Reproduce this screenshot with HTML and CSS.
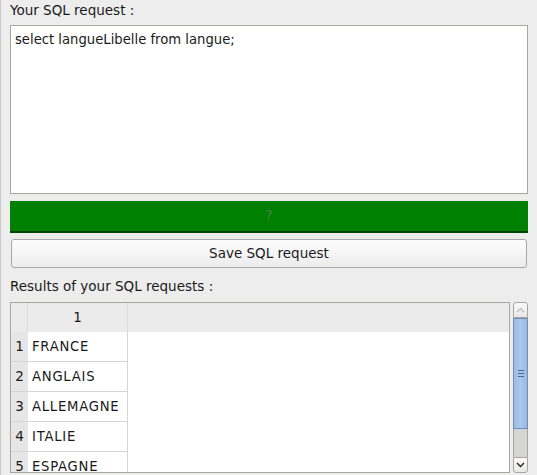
FILE: index.html
```html
<!DOCTYPE html>
<html>
<head>
<meta charset="utf-8">
<link rel="stylesheet" href="styles.css">
</head>
<body>
<div class="page">
  <div class="label top-label">Your SQL request :</div>
  <div class="editor">select langueLibelle from langue;</div>
  <div class="status">?</div>
  <div class="button">Save SQL request</div>
  <div class="label results-label">Results of your SQL requests :</div>
  <div class="results">
    <div class="table">
      <div class="row head">
        <div class="rownum"></div>
        <div class="cell">1</div>
        <div class="rest"></div>
      </div>
      <div class="row"><div class="rownum">1</div><div class="cell">FRANCE</div><div class="rest"></div></div>
      <div class="row"><div class="rownum">2</div><div class="cell">ANGLAIS</div><div class="rest"></div></div>
      <div class="row"><div class="rownum">3</div><div class="cell">ALLEMAGNE</div><div class="rest"></div></div>
      <div class="row"><div class="rownum">4</div><div class="cell">ITALIE</div><div class="rest"></div></div>
      <div class="row"><div class="rownum">5</div><div class="cell">ESPAGNE</div><div class="rest"></div></div>
    </div>
    <div class="scrollbar">
      <div class="sb-btn up"><svg width="9" height="6" viewBox="0 0 9 6"><path d="M1 5 L4.5 1.5 L8 5" fill="none" stroke="#b8b8b8" stroke-width="1.2"/></svg></div>
      <div class="sb-slider"><span></span><span></span><span></span></div>
      <div class="sb-track"></div>
      <div class="sb-btn down"><svg width="9" height="6" viewBox="0 0 9 6"><path d="M1 1 L4.5 4.5 L8 1" fill="none" stroke="#222" stroke-width="1.4"/></svg></div>
    </div>
  </div>
</div>
</body>
</html>
```
FILE: styles.css
```css
html, body {
  margin: 0;
  padding: 0;
  background: #ededed;
}
.page {
  width: 537px;
  height: 475px;
  box-sizing: border-box;
  padding: 0 9px 0 9px;
  overflow: hidden;
  font-family: "DejaVu Sans", sans-serif;
  font-size: 13px;
  color: #1a1a1a;
  border-left: 1px solid #c9c9c9;
  display: flex;
  flex-direction: column;
}
.label {
  height: 25px;
  line-height: 22px;
  font-size: 13.5px;
}
.top-label { line-height: 21px; }
.editor {
  height: 169px;
  box-sizing: border-box;
  background: #ffffff;
  border: 1px solid #a9a6a2;
  padding: 6px 4px;
  font-size: 13.2px;
  line-height: 15px;
}
.status {
  margin-top: 7px;
  height: 32px;
  box-sizing: border-box;
  background: #008000;
  border-bottom: 2px solid #004500;
  color: #4f7d4f;
  text-align: center;
  line-height: 29px;
  font-size: 14px;
}
.button {
  margin: 6px 1px 0 1px;
  height: 29px;
  box-sizing: border-box;
  border: 1px solid #a8a8a8;
  border-radius: 3px;
  background: linear-gradient(#fdfdfd, #ececec);
  text-align: center;
  line-height: 27px;
  font-size: 13.5px;
}
.results-label {
  margin-top: 6px;
  height: 28px;
  line-height: 24px;
}
.results {
  display: flex;
  gap: 3px;
  height: 171px;
}
.table {
  flex: 1;
  border: 1px solid #a9a6a2;
  background: #ffffff;
  overflow: hidden;
}
.row {
  display: flex;
  height: 30px;
  box-sizing: border-box;
}
.row .rownum {
  width: 17px;
  box-sizing: border-box;
  background: #e6e6e6;
  border-bottom: 1px solid #d4d4d4;
  text-align: center;
  line-height: 29px;
  font-size: 13.5px;
}
.row .cell {
  width: 100px;
  box-sizing: border-box;
  border-right: 1px solid #d4d4d4;
  border-bottom: 1px solid #d4d4d4;
  padding-left: 4px;
  line-height: 29px;
  font-size: 13.2px;
  letter-spacing: 0.75px;
}
.row .rest { flex: 1; }
.row.head {
  height: 29px;
  background: #ebebeb;
}
.row.head .rownum {
  background: #ebebeb;
  border-right: 1px solid #dcdcdc;
  border-bottom: none;
}
.row.head .cell {
  text-align: center;
  padding-left: 0;
  border-bottom: none;
  border-right: 1px solid #dcdcdc;
  line-height: 28px;
  font-size: 13.5px;
  letter-spacing: 0;
}
.row.head .rest { background: #ebebeb; }
.scrollbar {
  width: 15px;
  display: flex;
  flex-direction: column;
  box-sizing: border-box;
}
.sb-btn {
  height: 16px;
  box-sizing: border-box;
  border: 1px solid #a9a6a2;
  background: linear-gradient(#fafafa, #e8e8e8);
  display: flex;
  align-items: center;
  justify-content: center;
}
.sb-btn.up { border-radius: 3px 3px 0 0; }
.sb-btn.down { border-radius: 0 0 3px 3px; }
.sb-slider {
  height: 111px;
  box-sizing: border-box;
  border: 1px solid #6f8fba;
  background: linear-gradient(90deg, #9dbde6, #abc8ee 50%, #98b8e2);
  display: flex;
  flex-direction: column;
  align-items: center;
  justify-content: center;
  gap: 2px;
}
.sb-slider span {
  display: block;
  width: 6px;
  height: 1px;
  background: #4a6690;
}
.sb-track {
  flex: 1;
  background: #d5d5d5;
  border-left: 1px solid #a9a6a2;
  border-right: 1px solid #a9a6a2;
}
```
